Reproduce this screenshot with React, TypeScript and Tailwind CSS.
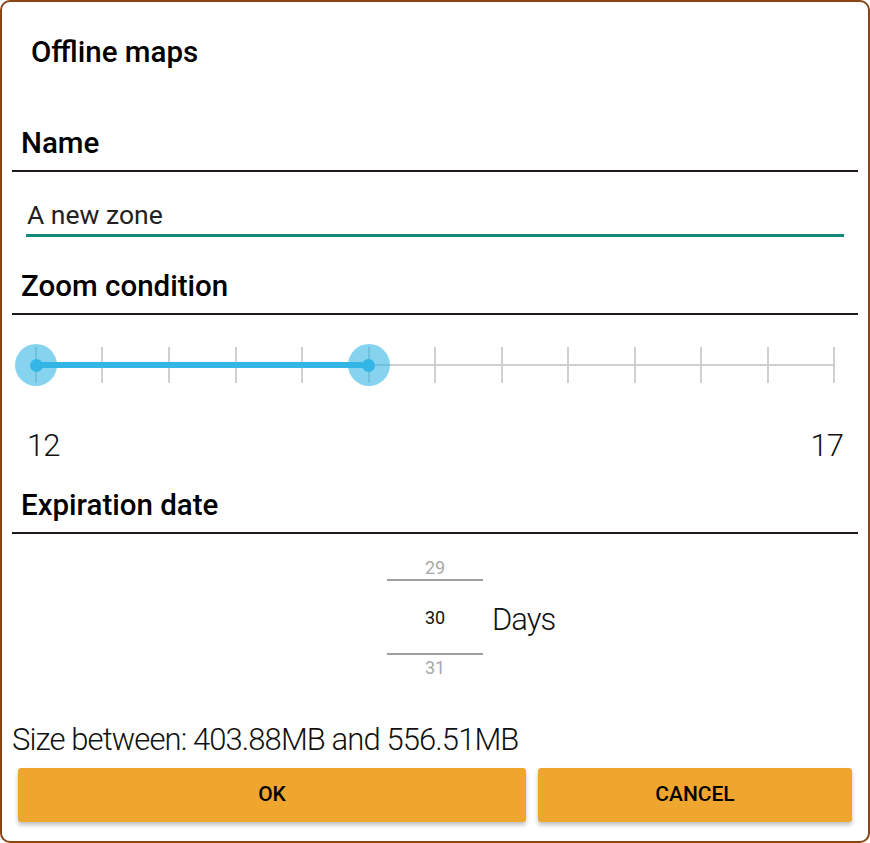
const TICKS = Array.from({ length: 13 }, (_, i) => i);

function SectionHeader({ label, className = '' }: { label: string; className?: string }) {
  return (
    <div className={`border-b-2 border-[#1f1a17] pb-[11px] pl-[9px] ${className}`}>
      <h2 className="text-[29.5px] leading-[32px] font-medium text-black">{label}</h2>
    </div>
  );
}

function RangeSlider({ from, to }: { from: number; to: number }) {
  const pct = (i: number) => `${(i / 12) * 100}%`;
  return (
    <div className="relative mx-[24px] h-[100px]">
      <div className="absolute left-0 right-0 top-[49px] h-[2px] bg-[#cfcfcf]" />
      {TICKS.map((i) => (
        <div
          key={i}
          className="absolute top-[32px] h-[36px] w-[2px] -ml-[1px] bg-[#cfcfcf]"
          style={{ left: pct(i) }}
        />
      ))}
      <div
        className="absolute top-[47px] h-[6px] bg-[#33b5e5]"
        style={{ left: pct(from), width: `${((to - from) / 12) * 100}%` }}
      />
      {[from, to].map((v) => (
        <div
          key={v}
          className="absolute top-[29px] -ml-[21px] flex h-[42px] w-[42px] items-center justify-center rounded-full bg-[#33b5e5]/60"
          style={{ left: pct(v) }}
        >
          <div className="h-[13px] w-[13px] rounded-full bg-[#33b5e5]" />
        </div>
      ))}
    </div>
  );
}

function NumberPicker() {
  return (
    <div className="flex w-[96px] flex-col items-center">
      <div className="h-[21px] text-[18px] leading-[20px] text-[#a8a8a8]">29</div>
      <div className="h-[2px] w-full bg-[#9e9e9e]" />
      <div className="flex h-[72px] items-center text-[18px] text-[#111]">30</div>
      <div className="h-[2px] w-full bg-[#9e9e9e]" />
      <div className="h-[26px] text-[18px] leading-[26px] text-[#a8a8a8]">31</div>
    </div>
  );
}

export default function App() {
  return (
    <div
      className="h-[843px] w-[870px] overflow-hidden rounded-[10px] border-2 border-[#8b4513] bg-white px-[10px]"
      style={{ fontFamily: 'Roboto, "Noto Sans", sans-serif' }}
    >
      <h1 className="pl-[19px] pt-[34px] text-[29.5px] leading-[32px] font-medium text-black">Offline maps</h1>

      <SectionHeader label="Name" className="mt-[59px]" />
      <div className="mx-[14px] mt-[28px] border-b-[3px] border-[#15897b] pb-[4px] pl-[1px]">
        <span className="block text-[26.5px] leading-[30px] text-[#222]">A new zone</span>
      </div>

      <SectionHeader label="Zoom condition" className="mt-[33px]" />
      <RangeSlider from={0} to={5} />
      <div className="mt-[13px] flex justify-between px-[15px] text-[31px] leading-[36px] font-light tracking-[-1px] text-[#111]">
        <span>12</span>
        <span>17</span>
      </div>

      <SectionHeader label="Expiration date" className="mt-[25px]" />
      <div className="mt-[24px] grid grid-cols-[1fr_auto_1fr] items-center">
        <div />
        <NumberPicker />
        <div className="pl-[9px] text-[31px] leading-[36px] font-light tracking-[-1px] text-[#111]">Days</div>
      </div>

      <p className="mt-[41px] text-[31px] leading-[36px] font-light tracking-[-0.9px] text-[#111]">
        Size between: 403.88MB and 556.51MB
      </p>

      <div className="mt-[10px] flex gap-[12px] px-[6px]">
        <button className="h-[54px] w-[508px] rounded-[3px] bg-[#efa62f] text-[21px] font-medium text-black shadow-[0_3px_4px_rgba(0,0,0,0.25)]">
          OK
        </button>
        <button className="h-[54px] w-[314px] rounded-[3px] bg-[#efa62f] text-[21px] font-medium text-black shadow-[0_3px_4px_rgba(0,0,0,0.25)]">
          CANCEL
        </button>
      </div>
    </div>
  );
}
